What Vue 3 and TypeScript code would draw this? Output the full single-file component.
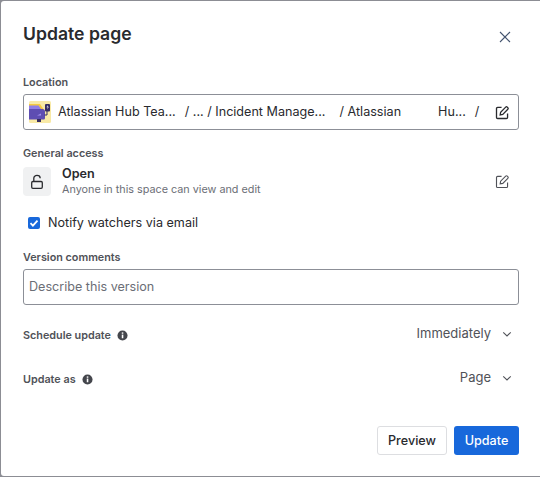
<template>
  <div class="backdrop">
    <section class="dialog">
      <header class="dialog-head">
        <h2>Update page</h2>
        <button type="button" class="icon-btn close-btn" aria-label="Close">
          <svg width="12" height="12" viewBox="0 0 12 12" fill="none" stroke="#44546f" stroke-width="1.100">
            <path d="M1 1l10 10M11 1L1 11" />
          </svg>
        </button>
      </header>

      <div class="field-label location-label">Location</div>
      <div class="location-box">
        <svg class="space-icon" width="22" height="22" viewBox="0 0 22 22">
          <rect width="22" height="22" rx="1.5" fill="#f8e9a6" />
          <path d="M0 3h11l4 6v2H0z" fill="#f5c93f" />
          <path d="M0 8h13.5c1.500 0 2.500 1 2.500 2.500V17c0 1-.7 1.500-1.500 1.500H0z" fill="#5e4db2" />
          <path d="M2 4.500h7.500l2.500 3.500H0V4.500z" fill="#8f7ee7" />
          <path d="M8 14.500l4-2v2z" fill="#9f8fef" />
          <rect x="8" y="18" width="4" height="3" fill="#352c63" />
          <path d="M15.500 14h2.500v-4" fill="none" stroke="#352c63" stroke-width="1" />
          <rect x="16" y="3" width="5" height="7.500" rx="1" fill="#352c63" />
          <path d="M18.800 4l-1.300 2.200h1.300l-.6 2.300 1.600-2.800h-1.200z" fill="#fff" />
        </svg>
        <span class="crumbs">
          <span class="c1">Atlassian Hub Tea...</span>
          <span class="c2">/ ... / Incident Manage...</span>
          <span class="c3">/ Atlassian</span>
          <span class="c4">Hu...</span>
          <span class="c5">/</span>
        </span>
        <button type="button" class="icon-btn" aria-label="Edit location">
          <svg width="15" height="15" viewBox="0 0 16 16" fill="none" stroke="#292a2e" stroke-width="1.400">
            <path d="M7 2.500H2.800c-.7 0-1.200.5-1.200 1.200v9.500c0 .7.500 1.200 1.200 1.200h9.400c.7 0 1.200-.5 1.200-1.200V9" />
            <path d="M5.500 10.500l.5-2.800 5.400-5.400c.5-.5 1.200-.5 1.700 0l.6.6c.5.5.5 1.200 0 1.700L8.300 10z" />
          </svg>
        </button>
      </div>

      <div class="field-label access-label">General access</div>
      <div class="access-row">
        <div class="lock-tile">
          <svg width="16" height="16" viewBox="0 0 16 16" fill="none" stroke="#292a2e" stroke-width="1.300">
            <rect x="2.700" y="7.500" width="10.600" height="6.800" rx="1.200" />
            <path d="M4.800 7.500V4.200C4.800 2.500 6.200 1.400 8 1.400s3.200 1.100 3.200 2.800" />
          </svg>
        </div>
        <div class="access-text">
          <div class="access-title">Open</div>
          <div class="access-sub">Anyone in this space can view and edit</div>
        </div>
        <button type="button" class="icon-btn" aria-label="Edit access">
          <svg width="15" height="15" viewBox="0 0 16 16" fill="none" stroke="#505258" stroke-width="1.200">
            <path d="M7 2.500H2.800c-.7 0-1.200.5-1.200 1.200v9.500c0 .7.500 1.200 1.200 1.200h9.400c.7 0 1.200-.5 1.200-1.200V9" />
            <path d="M5.500 10.500l.5-2.800 5.400-5.400c.5-.5 1.200-.5 1.700 0l.6.6c.5.5.5 1.200 0 1.700L8.300 10z" />
          </svg>
        </button>
      </div>

      <label class="notify-row">
        <span class="check">
          <svg width="10" height="10" viewBox="0 0 10 10" fill="none" stroke="#fff" stroke-width="1.800">
            <path d="M1.500 5.200l2.400 2.400 4.600-5" />
          </svg>
        </span>
        <span>Notify watchers via email</span>
      </label>

      <div class="field-label comments-label">Version comments</div>
      <div class="comment-box">{{ placeholder }}</div>

      <div v-for="row in selectRows" :key="row.label" class="select-row">
        <span class="field-label select-label">{{ row.label }}</span>
        <svg class="info" width="11" height="11" viewBox="0 0 12 12">
          <circle cx="6" cy="6" r="5.500" fill="#44464c" />
          <rect x="5.200" y="5" width="1.700" height="4" fill="#fff" />
          <rect x="5.200" y="2.600" width="1.700" height="1.500" fill="#fff" />
        </svg>
        <span class="select-value">{{ row.value }}</span>
        <svg class="chevron" width="10" height="10" viewBox="0 0 12 12" fill="none" stroke="#505258" stroke-width="1.300">
          <path d="M1.500 4L6 8.300 10.500 4" />
        </svg>
      </div>

      <footer class="dialog-foot">
        <button type="button" class="btn btn-secondary">Preview</button>
        <button type="button" class="btn btn-primary">Update</button>
      </footer>
    </section>
  </div>
</template>

<script setup lang="ts">
interface SelectRow {
  label: string
  value: string
}

const placeholder = 'Describe this version'

const selectRows: SelectRow[] = [
  { label: 'Schedule update', value: 'Immediately' },
  { label: 'Update as', value: 'Page' },
]
</script>

<style>
html,
body {
  margin: 0;
  background: #8c8d94;
}
</style>

<style scoped>
.backdrop {
  width: 540px;
  height: 477px;
  box-sizing: border-box;
  padding: 1px 0 1px 1px;
  overflow: hidden;
  font-family: Inter, "Liberation Sans", sans-serif;
  color: #292a2e;
}

.dialog {
  height: 100%;
  box-sizing: border-box;
  padding: 0 21px 0 22px;
  background: #fff;
  border-radius: 3px 0 0 3px;
}

.dialog-head {
  display: flex;
  align-items: flex-start;
  justify-content: space-between;
  height: 75px;
}

.dialog-head h2 {
  margin: 21px 0 0;
  font-size: 17.6px;
  line-height: 24px;
  font-weight: 600;
}

.icon-btn {
  display: flex;
  align-items: center;
  justify-content: center;
  padding: 0;
  border: 0;
  background: none;
}

.close-btn {
  margin: 30px 8px 0 0;
}

.field-label {
  font-size: 10.8px;
  line-height: 14px;
  font-weight: 600;
  color: #505258;
}

.location-label {
  margin-bottom: 4px;
}

.location-box {
  display: flex;
  align-items: center;
  height: 36px;
  box-sizing: border-box;
  padding: 0 8px 0 5px;
  border: 1px solid #8c8f97;
  border-radius: 3px;
}

.space-icon {
  flex: none;
  margin-right: 7px;
}

.crumbs {
  flex: 1;
  display: flex;
  font-size: 12.6px;
  line-height: 16px;
  white-space: nowrap;
  color: #292a2e;
}

.c2 {
  margin-left: 9px;
}

.c3 {
  margin-left: 14px;
}

.c4 {
  margin-left: 37px;
}

.c5 {
  margin-left: 9px;
}

.access-label {
  margin-top: 17px;
}

.access-row {
  display: flex;
  align-items: center;
  margin-top: 5px;
  padding-right: 9px;
}

.lock-tile {
  display: flex;
  align-items: center;
  justify-content: center;
  width: 28px;
  height: 29px;
  margin-right: 11px;
  border-radius: 4px;
  background: #f0f1f2;
}

.access-text {
  flex: 1;
}

.access-title {
  font-size: 12.6px;
  line-height: 15px;
  font-weight: 600;
}

.access-sub {
  margin-top: 1px;
  font-size: 10.8px;
  line-height: 15px;
  color: #6b6e76;
}

.notify-row {
  display: flex;
  align-items: center;
  gap: 8px;
  margin: 17px 0 0 5px;
  font-size: 12.6px;
  line-height: 18px;
}

.check {
  display: flex;
  align-items: center;
  justify-content: center;
  width: 12px;
  height: 12px;
  border-radius: 2px;
  background: #1868db;
}

.comments-label {
  margin-top: 19px;
}

.comment-box {
  height: 36px;
  box-sizing: border-box;
  margin-top: 4px;
  padding: 0 5px;
  border: 1px solid #8c8f97;
  border-radius: 3px;
  font-size: 12.6px;
  line-height: 34px;
  color: #6b6e76;
}

.select-row {
  display: flex;
  align-items: center;
  height: 24px;
  margin-top: 20px;
  padding-right: 7px;
}

.comment-box + .select-row {
  margin-top: 17px;
}

.select-label {
  margin-top: 3px;
}

.info {
  margin: 2px 0 0 6px;
}

.select-value {
  margin-left: auto;
  margin-top: -3px;
  font-size: 13px;
  color: #505258;
}

.chevron {
  margin-left: 11px;
}

.dialog-foot {
  display: flex;
  justify-content: flex-end;
  gap: 7px;
  margin-top: 36px;
}

.btn {
  height: 29px;
  box-sizing: border-box;
  border-radius: 3px;
  font-family: inherit;
  font-size: 12.6px;
  font-weight: 500;
}

.btn-secondary {
  width: 70px;
  border: 1px solid #dddee1;
  background: #fff;
  color: #292a2e;
}

.btn-primary {
  width: 65px;
  border: 0;
  background: #1868db;
  color: #fff;
}
</style>
